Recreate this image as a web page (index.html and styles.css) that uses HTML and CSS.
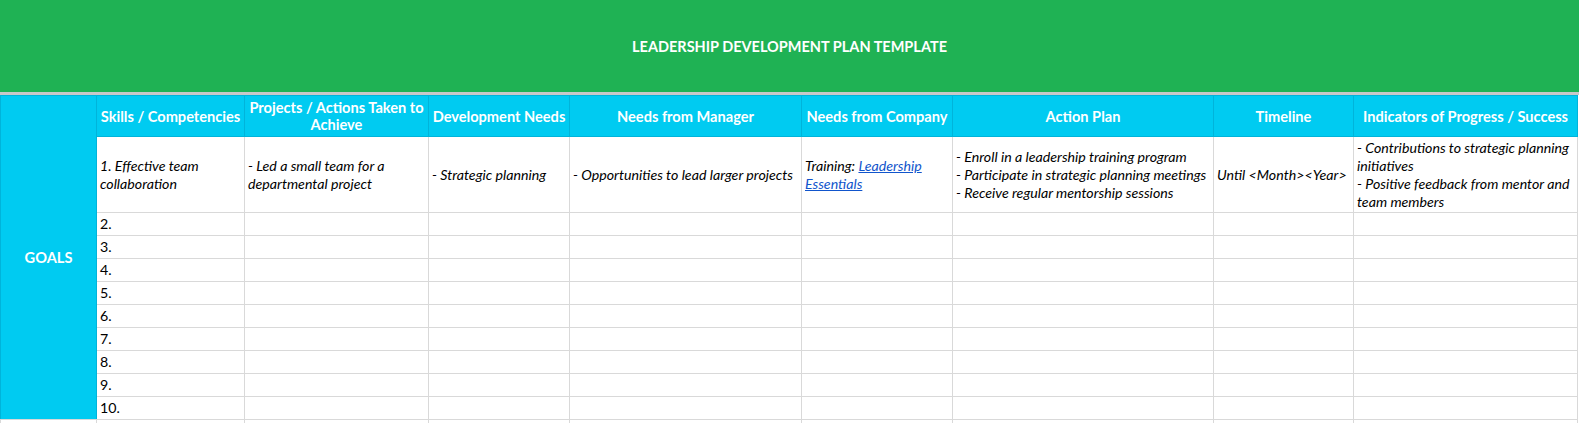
FILE: index.html
```html
<!DOCTYPE html>
<html>
<head>
<meta charset="utf-8">
<link rel="stylesheet" href="styles.css">
</head>
<body>
<div class="title-bar">LEADERSHIP DEVELOPMENT PLAN TEMPLATE</div>
<table class="plan">
  <colgroup>
    <col style="width:96px"><col style="width:148px"><col style="width:184px"><col style="width:141px"><col style="width:232px"><col style="width:151px"><col style="width:261px"><col style="width:140px"><col style="width:224px">
  </colgroup>
  <tr class="head">
    <th class="goals" rowspan="11">GOALS</th>
    <th>Skills / Competencies</th>
    <th>Projects / Actions Taken to Achieve</th>
    <th>Development Needs</th>
    <th>Needs from Manager</th>
    <th>Needs from Company</th>
    <th>Action Plan</th>
    <th>Timeline</th>
    <th>Indicators of Progress / Success</th>
  </tr>
  <tr class="first">
    <td>1. Effective team collaboration</td>
    <td>- Led a small team for a departmental project</td>
    <td>- Strategic planning</td>
    <td>- Opportunities to lead larger projects</td>
    <td><span>Training: <a href="#">Leadership Essentials</a></span></td>
    <td>- Enroll in a leadership training program<br>- Participate in strategic planning meetings<br>- Receive regular mentorship sessions</td>
    <td>Until &lt;Month&gt;&lt;Year&gt;</td>
    <td>- Contributions to strategic planning initiatives<br>- Positive feedback from mentor and team members</td>
  </tr>
  <tr class="row"><td class="num">2.</td><td></td><td></td><td></td><td></td><td></td><td></td><td></td></tr>
  <tr class="row"><td class="num">3.</td><td></td><td></td><td></td><td></td><td></td><td></td><td></td></tr>
  <tr class="row"><td class="num">4.</td><td></td><td></td><td></td><td></td><td></td><td></td><td></td></tr>
  <tr class="row"><td class="num">5.</td><td></td><td></td><td></td><td></td><td></td><td></td><td></td></tr>
  <tr class="row"><td class="num">6.</td><td></td><td></td><td></td><td></td><td></td><td></td><td></td></tr>
  <tr class="row"><td class="num">7.</td><td></td><td></td><td></td><td></td><td></td><td></td><td></td></tr>
  <tr class="row"><td class="num">8.</td><td></td><td></td><td></td><td></td><td></td><td></td><td></td></tr>
  <tr class="row"><td class="num">9.</td><td></td><td></td><td></td><td></td><td></td><td></td><td></td></tr>
  <tr class="row"><td class="num">10.</td><td></td><td></td><td></td><td></td><td></td><td></td><td></td></tr>
  <tr class="row"><td></td><td></td><td></td><td></td><td></td><td></td><td></td><td></td><td></td></tr>
</table>
</body>
</html>
```

FILE: styles.css
```css
html, body {
  margin: 0;
  padding: 0;
  background: #ffffff;
  font-family: Lato, "Open Sans", sans-serif;
  font-size: 14px;
  color: #000000;
  overflow: hidden;
}

.title-bar {
  height: 92px;
  background: #1fb254;
  border-bottom: 3px solid #c8c8c8;
  color: #ffffff;
  font-weight: 700;
  font-size: 14.5px;
  display: flex;
  align-items: center;
  justify-content: center;
}

.plan {
  border-collapse: collapse;
  table-layout: fixed;
  width: 1577px;
}

.plan th,
.plan td {
  padding: 0 3px;
  overflow: hidden;
}

.plan th {
  background: #00cbf1;
  color: #ffffff;
  font-weight: 700;
  font-size: 14.6px;
  line-height: 17px;
  text-align: center;
  vertical-align: middle;
  border: 1px solid #00b4da;
}

.plan .head {
  height: 41px;
}

.plan th.goals {
  border-bottom-color: #d9d9d9;
}

.plan td {
  border: 1px solid #d9d9d9;
  font-style: italic;
  font-size: 14.2px;
  line-height: 18px;
  vertical-align: middle;
  text-align: left;
}

.plan .first {
  height: 76px;
}

.plan .row {
  height: 23px;
}

.plan td.num {
  font-style: normal;
}

.plan a {
  color: #1155cc;
  text-decoration: underline;
}
```
